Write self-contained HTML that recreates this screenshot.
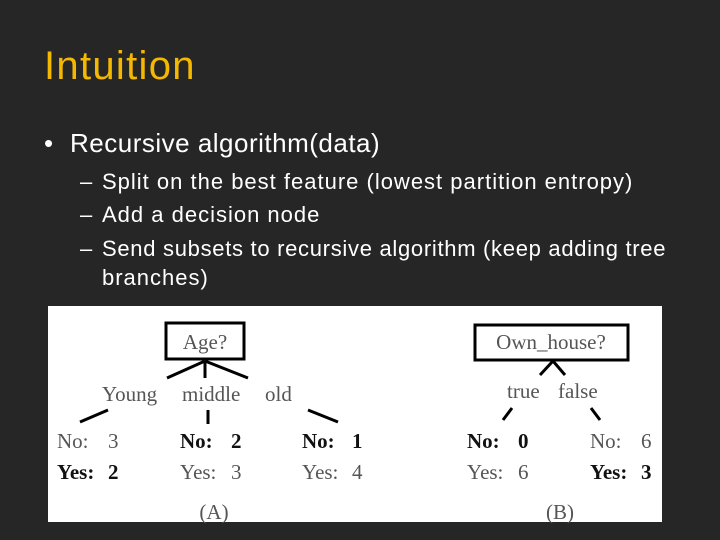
<!DOCTYPE html>
<html><head><style>
body{margin:0;width:720px;height:540px;background:#262626;overflow:hidden;position:relative;font-family:"Liberation Sans",sans-serif;}
.t{position:absolute;white-space:nowrap;color:#fff;}
.s{font-size:22px;letter-spacing:1px;}
</style></head><body>
<div class="t" style="left:44px;top:44px;font-size:40px;letter-spacing:1.3px;color:#f5b800;">Intuition</div>
<div class="t" style="left:44px;top:128px;font-size:26px;">•</div>
<div class="t" style="left:70px;top:128px;font-size:26px;letter-spacing:0.5px;">Recursive algorithm(data)</div>
<div class="t s" style="left:80px;top:169px;">–</div>
<div class="t s" style="left:102px;top:169px;">Split on the best feature (lowest partition entropy)</div>
<div class="t s" style="left:80px;top:202px;">–</div>
<div class="t s" style="left:102px;top:202px;">Add a decision node</div>
<div class="t s" style="left:80px;top:236px;">–</div>
<div class="t s" style="left:102px;top:236px;letter-spacing:0.7px;">Send subsets to recursive algorithm (keep adding tree</div>
<div class="t s" style="left:102px;top:265px;">branches)</div>
<svg style="position:absolute;left:0;top:0" width="720" height="540">
<rect x="48" y="306" width="614" height="216" fill="#fff"/>
<g font-family="Liberation Serif,serif" font-size="21" fill="#555">
<rect x="166" y="323" width="78" height="36" fill="none" stroke="#000" stroke-width="3"/>
<text x="205" y="349" text-anchor="middle">Age?</text>
<g stroke="#000" stroke-width="3" fill="none">
<path d="M205 361 L167 378 M205 361 V378 M205 361 L248 378"/>
<path d="M80 422 L108 410 M208 410 V424 M308 410 L338 422"/>
<path d="M553 361 L540 375 M553 361 L565 375"/>
<path d="M503 420 L512 408 M591 408 L600 420"/>
</g>
<rect x="475" y="325" width="153" height="35" fill="none" stroke="#000" stroke-width="3"/>
<text x="551" y="349" text-anchor="middle">Own_house?</text>
<text x="102" y="401">Young</text><text x="182" y="401">middle</text><text x="265" y="401">old</text>
<text x="507" y="398">true</text><text x="558" y="398">false</text>
<text x="57" y="448">No:</text><text x="108" y="448">3</text>
<g font-weight="bold" fill="#111"><text x="57" y="479">Yes:</text><text x="108" y="479">2</text></g>
<g font-weight="bold" fill="#111"><text x="180" y="448">No:</text><text x="231" y="448">2</text></g>
<text x="180" y="479">Yes:</text><text x="231" y="479">3</text>
<g font-weight="bold" fill="#111"><text x="302" y="448">No:</text><text x="352" y="448">1</text></g>
<text x="302" y="479">Yes:</text><text x="352" y="479">4</text>
<g font-weight="bold" fill="#111"><text x="467" y="448">No:</text><text x="518" y="448">0</text></g>
<text x="467" y="479">Yes:</text><text x="518" y="479">6</text>
<text x="590" y="448">No:</text><text x="641" y="448">6</text>
<g font-weight="bold" fill="#111"><text x="590" y="479">Yes:</text><text x="641" y="479">3</text></g>
<text x="214" y="519" text-anchor="middle">(A)</text>
<text x="560" y="519" text-anchor="middle">(B)</text>
</g>
</svg>
</body></html>
